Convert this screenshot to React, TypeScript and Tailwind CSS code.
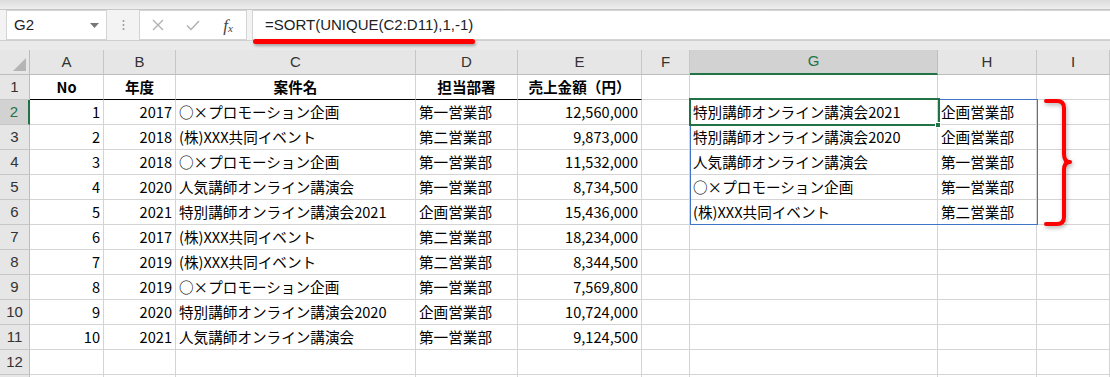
import React from 'react';

const cols = ['A', 'B', 'C', 'D', 'E', 'F', 'G', 'H', 'I'];

type Cell = { v: string; align?: 'l' | 'r' | 'c'; bold?: boolean };

const data: [string, string, string, string, string][] = [
  ['1', '2017', '○×プロモーション企画', '第一営業部', '12,560,000'],
  ['2', '2018', '(株)XXX共同イベント', '第二営業部', '9,873,000'],
  ['3', '2018', '○×プロモーション企画', '第一営業部', '11,532,000'],
  ['4', '2020', '人気講師オンライン講演会', '第一営業部', '8,734,500'],
  ['5', '2021', '特別講師オンライン講演会2021', '企画営業部', '15,436,000'],
  ['6', '2017', '(株)XXX共同イベント', '第二営業部', '18,234,000'],
  ['7', '2019', '(株)XXX共同イベント', '第二営業部', '8,344,500'],
  ['8', '2019', '○×プロモーション企画', '第一営業部', '7,569,800'],
  ['9', '2020', '特別講師オンライン講演会2020', '企画営業部', '10,724,000'],
  ['10', '2021', '人気講師オンライン講演会', '第一営業部', '9,124,500'],
];

const spill: [string, string][] = [
  ['特別講師オンライン講演会2021', '企画営業部'],
  ['特別講師オンライン講演会2020', '企画営業部'],
  ['人気講師オンライン講演会', '第一営業部'],
  ['○×プロモーション企画', '第一営業部'],
  ['(株)XXX共同イベント', '第二営業部'],
];

function buildRow(r: number): Cell[] {
  const empty: Cell[] = cols.map(() => ({ v: '' }));
  if (r === 1) {
    return [
      { v: 'No', align: 'c', bold: true },
      { v: '年度', align: 'c', bold: true },
      { v: '案件名', align: 'c', bold: true },
      { v: '担当部署', align: 'c', bold: true },
      { v: '売上金額（円）', align: 'c', bold: true },
      { v: '' },
      { v: '' },
      { v: '' },
      { v: '' },
    ];
  }
  const d = data[r - 2];
  if (!d) return empty;
  const s = spill[r - 2];
  return [
    { v: d[0], align: 'r' },
    { v: d[1], align: 'r' },
    { v: d[2] },
    { v: d[3] },
    { v: d[4], align: 'r' },
    { v: '' },
    { v: s ? s[0] : '' },
    { v: s ? s[1] : '' },
    { v: '' },
  ];
}

// row 13 is only a sliver at the bottom edge
const rows = Array.from({ length: 13 }, (_, i) => i + 1);

export default function App() {
  return (
    <div className="w-[1110px] h-[377px] overflow-hidden bg-white relative" style={{ fontFamily: '"Noto Sans CJK JP", "Noto Sans", sans-serif' }}>
      {/* ribbon edge */}
      <div className="h-[10px] bg-gradient-to-b from-[#dcdcdc] to-[#eeeeee] border-b border-[#c6c6c6]" />

      {/* formula bar */}
      <div className="h-[30px] flex bg-[#f3f3f3]">
        <div className="ml-[6px] w-[101px] h-full bg-white border border-[#d4d4d4] flex items-center justify-between pl-[7px] pr-[7px]">
          <span className="text-[15px] text-[#222] font-['Liberation_Sans',sans-serif]">G2</span>
          <svg width="9" height="5" viewBox="0 0 9 5"><path d="M0 0 L9 0 L4.5 5 Z" fill="#777" /></svg>
        </div>
        <div className="w-[32px] flex items-center justify-center">
          <svg width="3" height="12" viewBox="0 0 3 12">
            <circle cx="1.5" cy="2" r="1" fill="#999" />
            <circle cx="1.5" cy="6" r="1" fill="#999" />
            <circle cx="1.5" cy="10" r="1" fill="#999" />
          </svg>
        </div>
        <div className="w-[108px] h-full bg-white border border-[#d4d4d4] flex items-center">
          <div className="w-[36px] flex justify-center">
            <svg width="12" height="12" viewBox="0 0 12 12"><path d="M1 1 L11 11 M11 1 L1 11" stroke="#b0b0b0" strokeWidth="1.3" /></svg>
          </div>
          <div className="w-[34px] flex justify-center">
            <svg width="14" height="11" viewBox="0 0 14 11"><path d="M1 5.5 L5 9.5 L13 1" stroke="#b0b0b0" strokeWidth="1.4" fill="none" /></svg>
          </div>
          <div className="flex-1 flex justify-center text-[#444] italic font-['Liberation_Serif',serif] text-[17px] leading-none">
            <span>f</span><span className="text-[11px] mt-[6px]">x</span>
          </div>
        </div>
        <div className="ml-[5px] flex-1 h-full bg-white border border-r-0 border-[#d4d4d4] flex items-center pl-[12px]">
          <span className="text-[15px] text-[#222] font-['Liberation_Sans',sans-serif]">=SORT(UNIQUE(C2:D11),1,-1)</span>
        </div>
      </div>

      {/* gap under formula bar */}
      <div className="h-[10px] bg-[#eaeaea] border-t border-[#d0d0d0]" />

      {/* sheet grid */}
      <div className="relative">
        <div className="grid grid-cols-[30px_74px_72px_240px_102px_124px_48px_248px_99px_73px] auto-rows-[25px] text-[14.6px] text-black">
          {/* corner */}
          <div className="bg-[#e6e6e6] border-r border-b border-[#bdbdbd] relative">
            <svg className="absolute right-[3px] bottom-[3px]" width="13" height="13" viewBox="0 0 13 13"><path d="M13 0 L13 13 L0 13 Z" fill="#b5b5b5" /></svg>
          </div>
          {cols.map((c) => (
            <div
              key={c}
              className={
                c === 'G'
                  ? 'bg-[#d2d2d2] border-r border-[#bdbdbd] border-b-2 border-b-[#217346] flex items-center justify-center text-[#217346] text-[15px] font-["Liberation_Sans",sans-serif]'
                  : 'bg-[#e6e6e6] border-r border-b border-[#c6c6c6] border-b-[#bdbdbd] flex items-center justify-center text-[#333] text-[15px] font-["Liberation_Sans",sans-serif]'
              }
            >
              {c}
            </div>
          ))}

          {rows.map((r) => (
            <React.Fragment key={r}>
              <div
                className={
                  r === 2
                    ? 'bg-[#d2d2d2] border-b border-[#c6c6c6] border-r-2 border-r-[#217346] flex items-center justify-center text-[#217346] text-[15px] font-["Liberation_Sans",sans-serif]'
                    : 'bg-[#e6e6e6] border-b border-[#c6c6c6] border-r border-r-[#bdbdbd] flex items-center justify-center text-[#333] text-[15px] font-["Liberation_Sans",sans-serif]'
                }
              >
                {r < 13 ? r : ''}
              </div>
              {buildRow(r).map((cell, ci) => (
                <div
                  key={ci}
                  className={[
                    'border-r border-b border-[#d4d4d4] flex items-center px-[3px] whitespace-nowrap overflow-visible',
                    r === 1 && ci < 5 ? 'border-b-black' : '',
                    cell.align === 'r' ? 'justify-end' : cell.align === 'c' ? 'justify-center' : 'justify-start',
                    cell.bold ? 'font-bold' : '',
                  ].join(' ')}
                >
                  {cell.v}
                </div>
              ))}
            </React.Fragment>
          ))}
        </div>

        {/* spill range border G2:H6 */}
        <div className="absolute left-[690px] top-[49px] w-[348px] h-[126px] border border-[#3f74c9] pointer-events-none" />
        {/* active cell G2 */}
        <div className="absolute left-[689px] top-[48px] w-[251px] h-[28px] border-2 border-[#217346] pointer-events-none" />
        <div className="absolute left-[935px] top-[72px] w-[6px] h-[6px] bg-[#217346] border border-white pointer-events-none" />
      </div>

      {/* annotation: red underline */}
      <div className="absolute left-[253px] top-[39px] w-[222px] h-[5px] rounded-full bg-[#ff0000] shadow-[1px_2px_3px_rgba(0,0,0,0.3)]" />

      {/* annotation: red brace */}
      <svg className="absolute left-[1040px] top-[96px]" width="36" height="134" viewBox="0 0 36 134" style={{ filter: 'drop-shadow(1px 2px 2px rgba(0,0,0,0.3))' }}>
        <path
          d="M6 5 L17 5 Q24 5 24 12 L24 58 Q24 66 30 66 Q24 66 24 74 L24 121 Q24 128 17 128 L6 128"
          stroke="#ff0000"
          strokeWidth="4"
          fill="none"
          strokeLinecap="round"
          strokeLinejoin="round"
        />
      </svg>
    </div>
  );
}
